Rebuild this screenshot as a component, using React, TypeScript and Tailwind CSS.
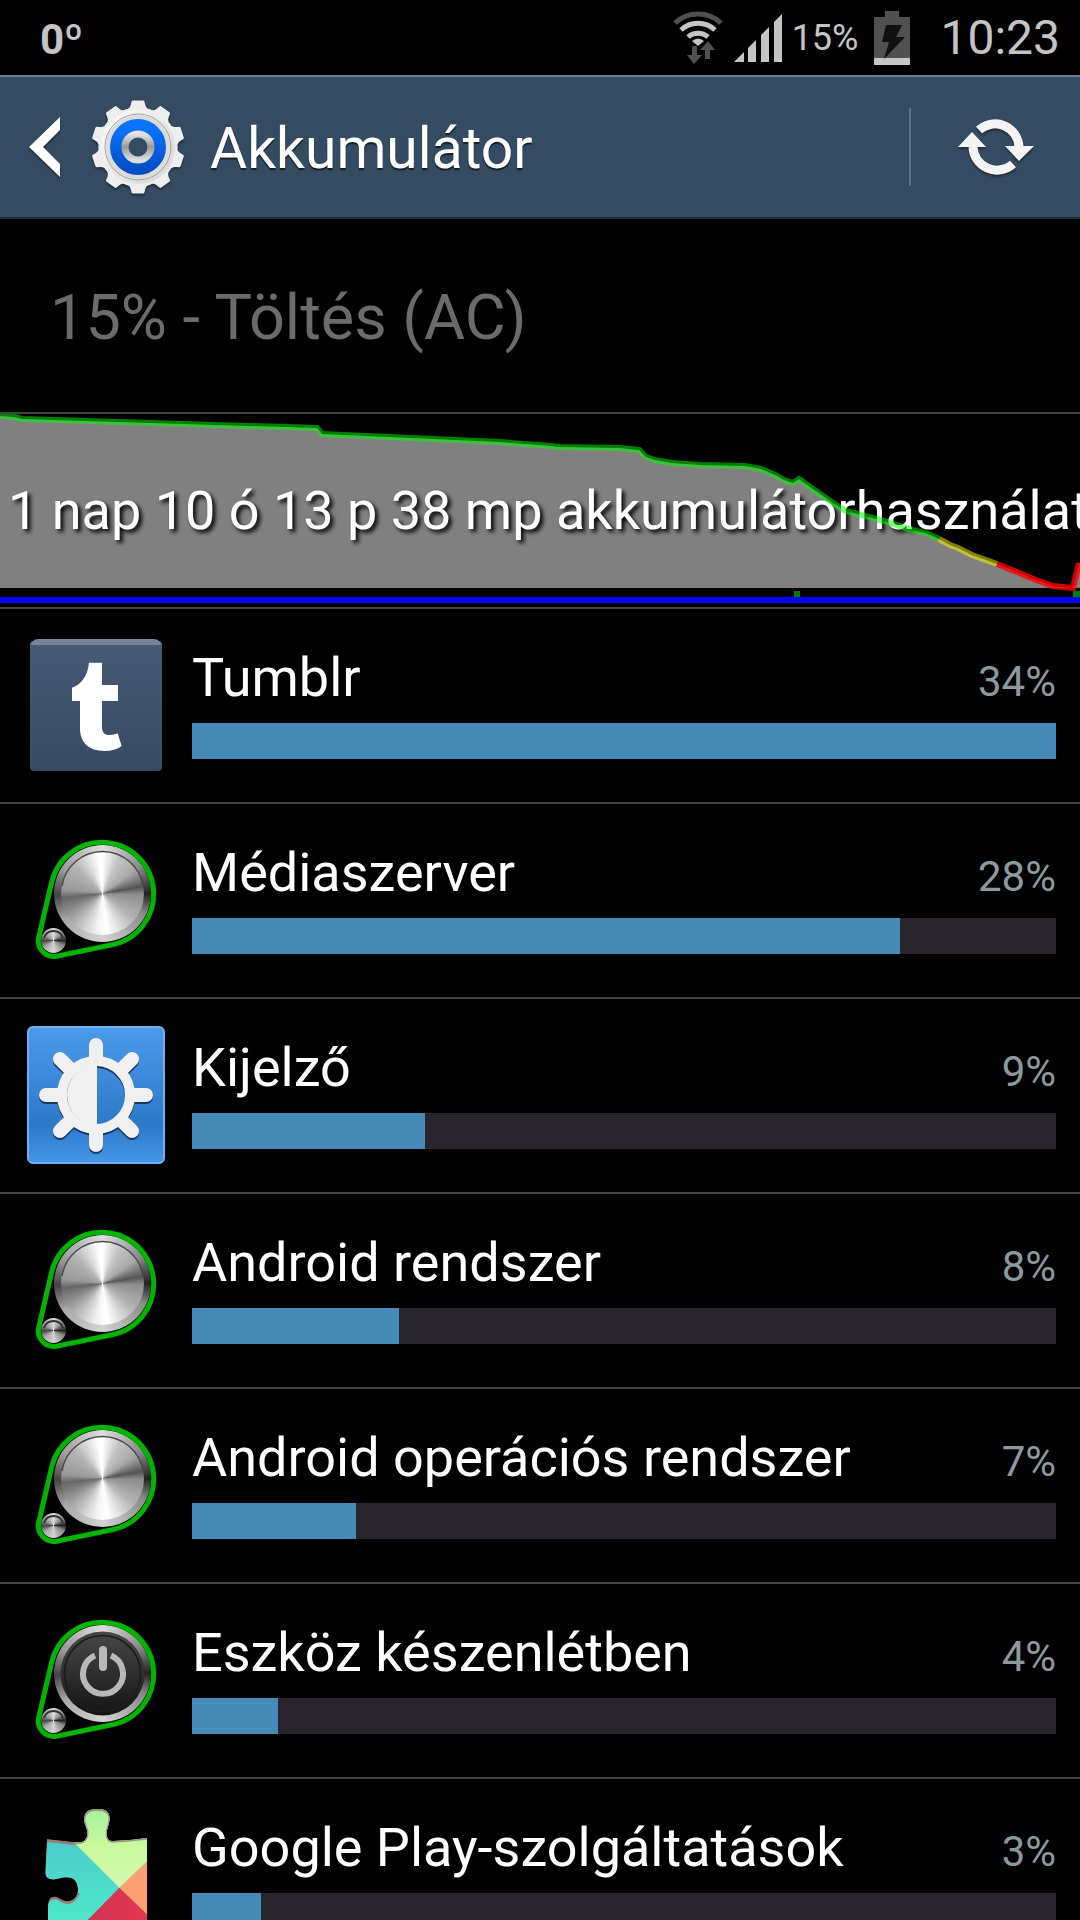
import type { ReactNode } from 'react';

interface UsageItem {
  name: string;
  percent: number;
  fill: number;
  icon: ReactNode;
}

const BRUSHED_FACE =
  'bg-[conic-gradient(#fff_0deg,#c4c4c4_25deg,#a8a8a8_55deg,#555_80deg,#8f8f8f_92deg,#b4b4b4_130deg,#fff_172deg,#f4f4f4_188deg,#b0b0b0_225deg,#666_264deg,#999_276deg,#b4b4b4_315deg,#fff_354deg,#fff_360deg)]';
const BRUSHED_RING =
  'bg-[conic-gradient(#ddd_0deg,#8a8a8a_55deg,#222_90deg,#888_115deg,#d4d4d4_180deg,#a8a8a8_235deg,#444_268deg,#999_300deg,#ddd_360deg)]';

function Knob({ children }: { children?: ReactNode }) {
  return (
    <svg viewBox="0 0 144 144" className="size-36" aria-hidden="true">
      <foreignObject x="29.5" y="17" width="97" height="97">
        <div className={`size-full rounded-full ${BRUSHED_RING}`} />
      </foreignObject>
      {children ?? (
        <>
          <foreignObject x="37" y="24" width="83" height="83">
            <div className={`size-full rounded-full ${BRUSHED_FACE}`} />
          </foreignObject>
          <path d="M38 58A41 41 0 0 1 119 58" fill="none" stroke="#4a4a4a" strokeWidth="1.5" />
        </>
      )}
      <foreignObject x="17" y="100" width="25" height="25">
        <div className={`size-full rounded-full ${BRUSHED_RING}`} />
      </foreignObject>
      <path d="M20 110A10 10 0 0 1 39 110" fill="none" stroke="#333" strokeWidth="2" />
      <path
        d="M27.6 54.4A51.7 51.7 0 1 1 88 116.7L32.4 128.2A15.5 15.5 0 0 1 14.7 109.6Z"
        fill="none"
        stroke="#00b400"
        strokeWidth="5"
      />
    </svg>
  );
}

function PowerKnob() {
  return (
    <Knob>
      <defs>
        <linearGradient id="power-face" x1="0" y1="0" x2="0" y2="1">
          <stop offset="0" stopColor="#484848" />
          <stop offset="1" stopColor="#141414" />
        </linearGradient>
      </defs>
      <circle cx="78.5" cy="65.5" r="42" fill="url(#power-face)" />
      <circle cx="78.5" cy="65.5" r="38" fill="none" stroke="#1c1c1c" strokeWidth="1.5" />
      <path d="M71 47.5A20 20 0 1 0 87 47.5" fill="none" stroke="#b8b8b8" strokeWidth="6" />
      <path d="M79 42V59" stroke="#b8b8b8" strokeWidth="8" strokeLinecap="round" />
    </Knob>
  );
}

function TumblrIcon() {
  return (
    <svg viewBox="0 0 144 144" className="size-36" aria-hidden="true">
      <defs>
        <linearGradient id="tumblr-tile" x1="0" y1="0" x2="0" y2="1">
          <stop offset="0" stopColor="#475a75" />
          <stop offset="1" stopColor="#364a63" />
        </linearGradient>
      </defs>
      <rect x="6" y="8" width="132" height="130" rx="4" fill="url(#tumblr-tile)" />
      <path d="M6 12C8 9 10 6 14 6H130C134 6 136 9 138 12Z" fill="#78839a" />
      <path
        transform="translate(-24 -23) scale(.3333)"
        d="M267 158H306V225H354V273H306V350C306 368 315 375 327 375C337 375 346 373 353 370L365 408C352 418 334 423 314 423C266 423 240 398 240 355V273H216V233C245 222 263 198 267 158Z"
        fill="#fff"
      />
    </svg>
  );
}

const RAYS = [0, 45, 90, 135, 180, 225, 270, 315];

function SunShape({ color }: { color: string }) {
  return (
    <g stroke={color} fill="none">
      {RAYS.map(angle => (
        <path
          key={angle}
          d={angle % 90 === 0 ? 'M72 36V22' : 'M72 36V21'}
          strokeWidth="14"
          strokeLinecap="round"
          transform={`rotate(${angle} 72 72)`}
        />
      ))}
      <circle cx="72" cy="72" r="34" strokeWidth="10" />
      <path d="M73 42A30 30 0 0 0 73 102Z" fill={color} stroke="none" />
    </g>
  );
}

function DisplayIcon() {
  return (
    <svg viewBox="0 0 144 144" className="size-36" aria-hidden="true">
      <defs>
        <linearGradient id="display-tile" x1="0" y1="0" x2="0" y2="1">
          <stop offset="0" stopColor="#4c9aea" />
          <stop offset="0.5" stopColor="#3683d3" />
          <stop offset="0.72" stopColor="#2b78ca" />
          <stop offset="1" stopColor="#4596e8" />
        </linearGradient>
      </defs>
      <rect x="4" y="4" width="136" height="136" rx="5" fill="url(#display-tile)" stroke="#6db0f3" strokeWidth="2" />
      <g transform="translate(0 2)">
        <SunShape color="#16385f" />
      </g>
      <SunShape color="#f0f0f0" />
    </svg>
  );
}

function PlayServicesIcon() {
  const body =
    'M141 748C180 752 215 757 240 757C256 755 265 740 262 722C258 708 252 700 253 685C254 664 268 657 292 657C316 657 328 664 329 685C328 705 320 715 320 732C320 748 328 753 340 753C375 752 405 748 441 744V1050H144V950C144 930 150 920 165 920C178 922 188 936 208 934C226 930 234 915 234 895C232 872 220 863 202 862C180 862 170 870 156 868C142 866 136 858 136 846Z';
  return (
    <svg viewBox="0 0 144 144" className="size-36" aria-hidden="true">
      <defs>
        <clipPath id="puzzle">
          <path d={body} />
        </clipPath>
        <linearGradient id="puzzle-green" x1="0" y1="0" x2="0" y2="1">
          <stop offset="0" stopColor="#a4eea0" />
          <stop offset="0.5" stopColor="#c8fa9e" />
          <stop offset="1" stopColor="#d4f9ae" />
        </linearGradient>
        <linearGradient id="puzzle-teal" x1="0" y1="0" x2="0" y2="1">
          <stop offset="0" stopColor="#4cc3cb" />
          <stop offset="0.75" stopColor="#4de4ca" />
        </linearGradient>
        <linearGradient id="puzzle-red" x1="0" y1="0" x2="1" y2="0">
          <stop offset="0" stopColor="#c83060" />
          <stop offset="1" stopColor="#e8384a" />
        </linearGradient>
      </defs>
      <g transform="translate(-24 -213) scale(.3333)">
        <path d={body} fill="#977b75" />
        <g clipPath="url(#puzzle)">
          <path d={body} fill="url(#puzzle-teal)" transform="translate(0 8)" />
          <path d="M215 750L358 893L460 797V640H215Z" fill="url(#puzzle-green)" />
          <path d="M358 893L460 797V995Z" fill="#ffa073" />
          <path d="M358 893L180 1075H480V1010Z" fill="url(#puzzle-red)" />
          <path
            d="M141 750C180 754 215 759 240 759C256 757 265 742 262 722C258 708 252 700 253 685C254 666 268 659 292 659C316 659 328 666 329 685C328 705 320 715 320 732C320 750 328 755 340 755C375 754 405 750 441 746"
            fill="none"
            stroke="#8f8078"
            strokeWidth="6"
            opacity="0.8"
          />
          <path d="M148 925C154 914 178 922 188 930C205 936 225 930 232 908" fill="none" stroke="#977b75" strokeWidth="14" />
        </g>
      </g>
    </svg>
  );
}

const TEETH = [0, 36, 72, 108, 144, 180, 216, 252, 288, 324];

function SettingsIcon() {
  return (
    <svg viewBox="0 0 96 96" className="size-24 drop-shadow-[0_2px_1px_#0006]" aria-hidden="true">
      <defs>
        <linearGradient id="gear-metal" x1="0" y1="0" x2="1" y2="1">
          <stop offset="0" stopColor="#fafafa" />
          <stop offset="1" stopColor="#d8d8d8" />
        </linearGradient>
        <linearGradient id="gear-blue" x1="0" y1="0" x2="0" y2="1">
          <stop offset="0" stopColor="#0d74ff" />
          <stop offset="1" stopColor="#0050c4" />
        </linearGradient>
        <linearGradient id="gear-hub" x1="0" y1="0" x2="0" y2="1">
          <stop offset="0" stopColor="#e4e4e4" />
          <stop offset="0.5" stopColor="#999" />
          <stop offset="1" stopColor="#e0e0e0" />
        </linearGradient>
      </defs>
      {TEETH.map(angle => (
        <path
          key={angle}
          d="M36 12C41 11 42 8 43 3H53C54 8 55 11 60 12V20H36Z"
          fill="#eee"
          stroke="#eee"
          strokeWidth="3"
          strokeLinejoin="round"
          transform={`rotate(${angle} 48 48)`}
        />
      ))}
      <circle cx="48" cy="48" r="31" fill="none" stroke="url(#gear-metal)" strokeWidth="12" />
      <circle cx="48" cy="48" r="33" fill="none" stroke="#a5a29c" strokeWidth="1" />
      <circle cx="48" cy="48" r="30" fill="none" stroke="#dcdcdc" strokeWidth="4" />
      <circle cx="48" cy="48" r="22" fill="none" stroke="url(#gear-blue)" strokeWidth="12" />
      <circle cx="48" cy="48" r="13" fill="#344b62" stroke="url(#gear-hub)" strokeWidth="7" />
    </svg>
  );
}

function RefreshIcon() {
  return (
    <svg viewBox="0 0 76 60" className="h-15 w-19 drop-shadow-[0_2px_1px_#0006]" aria-hidden="true">
      <path d="M21 13A24 24 0 0 1 61 30" fill="none" stroke="#f4f4f4" strokeWidth="9" />
      <path d="M47 29H76L61 44Z" fill="#f4f4f4" />
      <path d="M55 47A24 24 0 0 1 15 30" fill="none" stroke="#f4f4f4" strokeWidth="9" />
      <path d="M0 30H28L14 15Z" fill="#f4f4f4" />
    </svg>
  );
}

function WifiIcon() {
  return (
    <svg viewBox="0 0 50 54" className="h-[54px] w-[50px]" aria-hidden="true">
      <g fill="none" stroke="#c4c4c4" strokeWidth="5">
        <path d="M2 12A34 34 0 0 1 48 12" stroke="#505050" />
        <path d="M8 19A25 25 0 0 1 42 19" />
        <path d="M15 26A15 15 0 0 1 35 26" />
      </g>
      <path d="M19 30Q25 25 31 30L25 35Z" fill="#c4c4c4" />
      <path d="M19 35H24V44H29L21 53L14 44H19ZM32 48H37V39H42L35 30L27 39H32Z" fill="#505050" />
    </svg>
  );
}

function SignalIcon() {
  return (
    <svg viewBox="0 0 48 48" className="size-12" fill="#c4c4c4" aria-hidden="true">
      <path d="M0 48L10 38V48ZM14 48V34L22 26V48ZM27 48V21L35 13V48ZM40 48V8L48 0V48Z" />
    </svg>
  );
}

function BatteryIcon() {
  return (
    <svg viewBox="0 0 36 54" className="h-[54px] w-9" aria-hidden="true">
      <path d="M11 0H25V6H36V47H0V6H11Z" fill="#505050" />
      <path d="M0 47H36V54H0Z" fill="#c4c4c4" />
      <path d="M12 14H28L22 26H31L10 48L15 31H8Z" fill="#101010" />
    </svg>
  );
}

const GREEN_LINE =
  '0,2 14,3 22,5 317,14 322,20 500,28 523,30 540,31 560,33 619,34 639,36 646,43 655,46 672,49 700,51 745,52 761,55 766,57 775,61 784,66 793,69 799,65 810,73 833,89 846,97 884,107 912,116 926,119 939,125';
const YELLOW_LINE = '939,125 950,131 958,134 972,141 997,150';
const RED_LINE = '997,150 1017,158 1036,166 1053,172 1073,174 1079,149';

function HistoryChart() {
  return (
    <section className="relative border-y-2 border-[#424242]">
      <svg viewBox="0 0 1080 193" preserveAspectRatio="none" className="block h-[193px] w-full" aria-hidden="true">
        <polygon points={`${GREEN_LINE} ${YELLOW_LINE} ${RED_LINE} 1080,149 1080,174 0,174`} fill="#808080" />
        <path d="M794 177H800V183H794ZM1073 177H1080V183H1073Z" fill="#008000" />
        <path d="M0 183H1080V189H0Z" fill="#00f" />
      </svg>
      <p className="absolute inset-x-0 top-[62px] overflow-hidden pl-2 text-[54px] leading-[70px] whitespace-nowrap [text-shadow:3px_3px_4px_#000]">
        1 nap 10 ó 13 p 38 mp akkumulátorhasználat
      </p>
      {/* the level line stays above the label */}
      <svg
        viewBox="0 0 1080 193"
        preserveAspectRatio="none"
        className="absolute inset-0 h-full w-full"
        fill="none"
        strokeWidth="6"
        aria-hidden="true"
      >
        <polyline points={GREEN_LINE} stroke="#00ff00" strokeOpacity="0.5" />
        <polyline points={YELLOW_LINE} stroke="#ffff00" strokeOpacity="0.5" />
        <polyline points={RED_LINE} stroke="#ff0000" strokeOpacity="0.8" />
      </svg>
    </section>
  );
}

const ITEMS: UsageItem[] = [
  { name: 'Tumblr', percent: 34, fill: 100, icon: <TumblrIcon /> },
  { name: 'Médiaszerver', percent: 28, fill: 82, icon: <Knob /> },
  { name: 'Kijelző', percent: 9, fill: 27, icon: <DisplayIcon /> },
  { name: 'Android rendszer', percent: 8, fill: 24, icon: <Knob /> },
  { name: 'Android operációs rendszer', percent: 7, fill: 19, icon: <Knob /> },
  { name: 'Eszköz készenlétben', percent: 4, fill: 10, icon: <PowerKnob /> },
  { name: 'Google Play-szolgáltatások', percent: 3, fill: 8, icon: <PlayServicesIcon /> },
];

function UsageRow({ item }: { item: UsageItem }) {
  return (
    <li className="flex h-[195px] border-b-2 border-[#424242] pr-6">
      <div className="w-48 shrink-0 px-6 pt-6">{item.icon}</div>
      <div className="min-w-0 flex-1 pt-[33px]">
        <div className="flex items-baseline justify-between">
          <span className="truncate text-[54px] leading-[72px]">{item.name}</span>
          <span className="text-[42px] leading-[72px] text-[#8c999d]">{item.percent}%</span>
        </div>
        <div className="mt-[5px] h-9 bg-[#28252c]">
          <div className="h-full bg-[#468bb8]" style={{ width: `${item.fill}%` }} />
        </div>
      </div>
    </li>
  );
}

export default function App() {
  return (
    <div className="flex h-screen flex-col overflow-hidden bg-black font-['Roboto',sans-serif] text-white">
      <div className="flex h-[75px] shrink-0 items-center justify-between pr-5 pl-10 text-[#c4c4c4]">
        <span className="pt-1 text-[42px] leading-[56px] font-bold">0º</span>
        <div className="flex h-[70px] items-center">
          <WifiIcon />
          <span className="pl-[11px]">
            <SignalIcon />
          </span>
          <span className="pl-[10px] text-4xl">15%</span>
          <span className="pl-4">
            <BatteryIcon />
          </span>
          <span className="pl-[30px] text-5xl">10:23</span>
        </div>
      </div>

      <header className="flex h-36 shrink-0 items-center border-t-2 border-b-2 border-t-[#6a7a8e] border-b-[#1d2b39] bg-[#344b62]">
        <button aria-label="Vissza" className="pl-7">
          <svg viewBox="0 0 32 60" className="h-15 w-8 drop-shadow-[0_2px_1px_#0006]" aria-hidden="true">
            <path d="M32 0V13L15 30L32 47V60L1 30Z" fill="#fff" />
          </svg>
        </button>
        <div className="pl-[30px]">
          <SettingsIcon />
        </div>
        <h1 className="flex-1 pt-1 pl-6 text-[57px] leading-[72px] [text-shadow:0_2px_1px_#0009]">Akkumulátor</h1>
        <div className="h-[78px] w-[2px] bg-[#5d7389]" />
        <button aria-label="Frissítés" className="flex w-[169px] items-center justify-center">
          <RefreshIcon />
        </button>
      </header>

      <main>
        <p className="px-[50px] pt-[59px] pb-[54px] text-[63px] leading-[80px] text-[#6b6b6b]">15% - Töltés (AC)</p>
        <HistoryChart />
        <ul>
          {ITEMS.map(item => (
            <UsageRow key={item.name} item={item} />
          ))}
        </ul>
      </main>
    </div>
  );
}
